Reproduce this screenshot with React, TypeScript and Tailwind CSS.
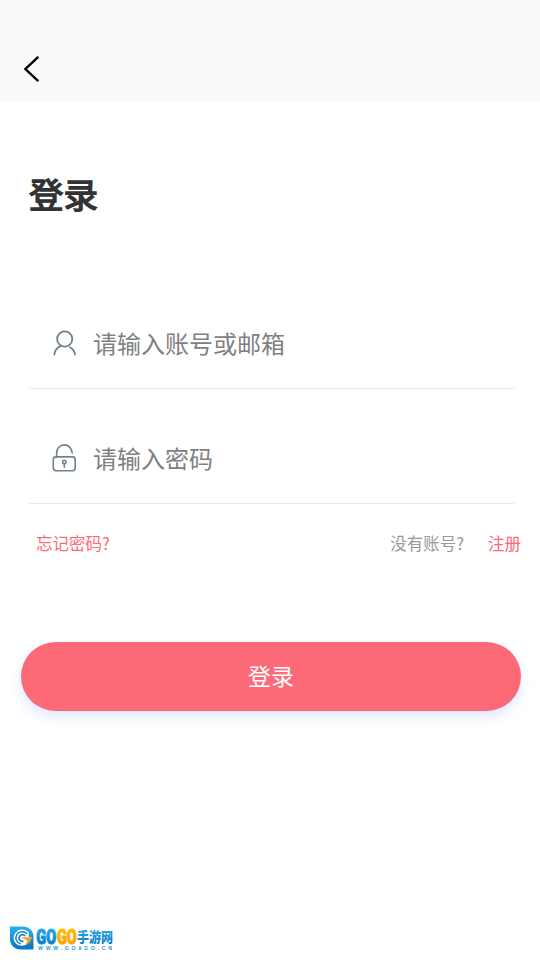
import React, { useState } from 'react';

const FONT = "font-['Noto_Sans_CJK_SC','Noto_Sans',sans-serif]";

const UserIcon = () => (
  <svg className="w-6 h-[26px] mb-[2px]" viewBox="0 0 24 26" fill="none" stroke="#708090" strokeWidth="1.8" strokeLinecap="round">
    <circle cx="12.7" cy="9" r="7.6" />
    <path d="M2.3 24.6C2.8 20.6 5 17.7 8.6 16.2" />
    <path d="M18 17.2C20.6 18.6 22.5 21.3 23 24.6" />
  </svg>
);

const LockIcon = () => (
  <svg className="w-6 h-7 mb-[2px]" viewBox="0 0 24 28" fill="none" stroke="#708090" strokeWidth="1.6" strokeLinecap="round">
    <path d="M4.6 13V9.2C4.6 4.5 7.9 0.9 12.3 0.9C16.5 0.9 19.8 4.2 20.2 9" />
    <rect x="1.3" y="12.9" width="21.9" height="13.8" rx="2.6" />
    <circle cx="12.3" cy="17.9" r="1.7" />
    <path d="M12.3 19.7V23.2" />
  </svg>
);

const SiteLogo = () => (
  <svg className="block w-28 h-7" viewBox="0 0 112 28">
    <defs>
      <linearGradient id="blue" x1="0" y1="0" x2="0" y2="1">
        <stop offset="0" stopColor="#25b5ea" />
        <stop offset="1" stopColor="#0873c4" />
      </linearGradient>
      <linearGradient id="orange" x1="0" y1="0" x2="0" y2="1">
        <stop offset="0" stopColor="#ffc400" />
        <stop offset="1" stopColor="#ff9800" />
      </linearGradient>
    </defs>
    <path d="M2 2.5H15C21 2.5 25.5 7 25.5 13V25.5H12.5C6.5 25.5 2 21 2 15Z" fill="url(#blue)" />
    <path d="M20.6 8.2C17.6 4.9 12.2 4.6 8.8 7.4C4.9 10.6 4.7 16.2 8 19.5C11.2 22.7 16.8 22.4 20.4 19L23.7 13.2H21Z" fill="#fff" />
    <path d="M19 9.6C15.8 6.6 10.8 7.2 8.7 10.8C6.6 14.5 8.6 19.1 12.8 19.9" fill="none" stroke="#1687ca" strokeWidth="1.5" />
    <path d="M17.2 12C15.2 9.7 11.5 10.6 11.1 13.7C10.8 16.2 13 17.8 15.5 17.2" fill="none" stroke="#1687ca" strokeWidth="1.8" />
    <path d="M12.8 13.3H23.6C23.2 17.5 20.7 20 17.6 20.8L19.4 16.8Z" fill="#f5a51d" />
    <g fontFamily="Roboto, sans-serif" fontWeight="900" fontSize="21" strokeWidth="1.1">
      <text transform="translate(28.3 19.8) scale(0.64 1)" textLength="31" lengthAdjust="spacingAndGlyphs" fill="url(#blue)" stroke="url(#blue)">GO</text>
      <text transform="translate(49 19.8) scale(0.64 1)" textLength="31" lengthAdjust="spacingAndGlyphs" fill="url(#orange)" stroke="url(#orange)">GO</text>
    </g>
    <text
      transform="translate(69 18.4) scale(0.86 1)"
      fontFamily="'Noto Sans CJK SC', sans-serif"
      fontWeight="900"
      fontSize="14"
      fill="url(#blue)"
    >
      手游网
    </text>
    <text x="30" y="25.6" textLength="74" fontFamily="'Liberation Sans', sans-serif" fontWeight="700" fontSize="5.2" fill="#2b9bd8">
      WWW.GO9GO.CN
    </text>
  </svg>
);

type FieldProps = {
  icon: React.ReactNode;
  type: string;
  placeholder: string;
  value: string;
  onChange: (value: string) => void;
};

const Field = ({ icon, type, placeholder, value, onChange }: FieldProps) => (
  <div className="flex items-center h-[90px] pl-[23px] border-b border-[#e8e8e8]">
    {icon}
    <input
      type={type}
      value={value}
      placeholder={placeholder}
      onChange={(e) => onChange(e.target.value)}
      className="flex-1 ml-[17px] mb-[2px] h-10 text-2xl outline-none placeholder:text-[#808080]"
    />
  </div>
);

const App = () => {
  const [account, setAccount] = useState('');
  const [password, setPassword] = useState('');

  return (
    <div className={`relative h-screen overflow-hidden bg-white ${FONT}`}>
      <header className="h-[102px] pt-[54px] pl-[22px] bg-[#fafafa]">
        <button className="block">
          <svg className="w-5 h-[30px]" viewBox="0 0 20 30" fill="none" stroke="#000" strokeWidth="2.4">
            <path d="M16.3 2.8L3.4 15L16.3 27.2" />
          </svg>
        </button>
      </header>

      <h1 className="mt-[66px] ml-[29px] h-[51px] leading-[51px] text-[34.5px] font-normal text-[#333] [-webkit-text-stroke:1.4px_#333]">
        登录
      </h1>

      <div className="mt-20 ml-[29px] mr-[26px] flex flex-col gap-[25px]">
        <Field icon={<UserIcon />} type="text" placeholder="请输入账号或邮箱" value={account} onChange={setAccount} />
        <Field icon={<LockIcon />} type="password" placeholder="请输入密码" value={password} onChange={setPassword} />
      </div>

      <div className="mt-[27px] pl-9 pr-[19px] h-6 flex items-center text-[16.5px] leading-6 text-[#fc6a78]">
        <a>忘记密码?</a>
        <span className="ml-auto text-[#999]">没有账号?</span>
        <a className="ml-[24px]">注册</a>
      </div>

      <button className="block mt-[87px] ml-[21px] pb-[2px] w-[500px] h-[69px] rounded-full bg-[#fc6a78] text-[23px] text-white shadow-[0_6px_12px_rgba(70,110,255,0.16)]">
        登录
      </button>

      <div className="absolute left-2 bottom-2">
        <SiteLogo />
      </div>
    </div>
  );
};

export default App;
